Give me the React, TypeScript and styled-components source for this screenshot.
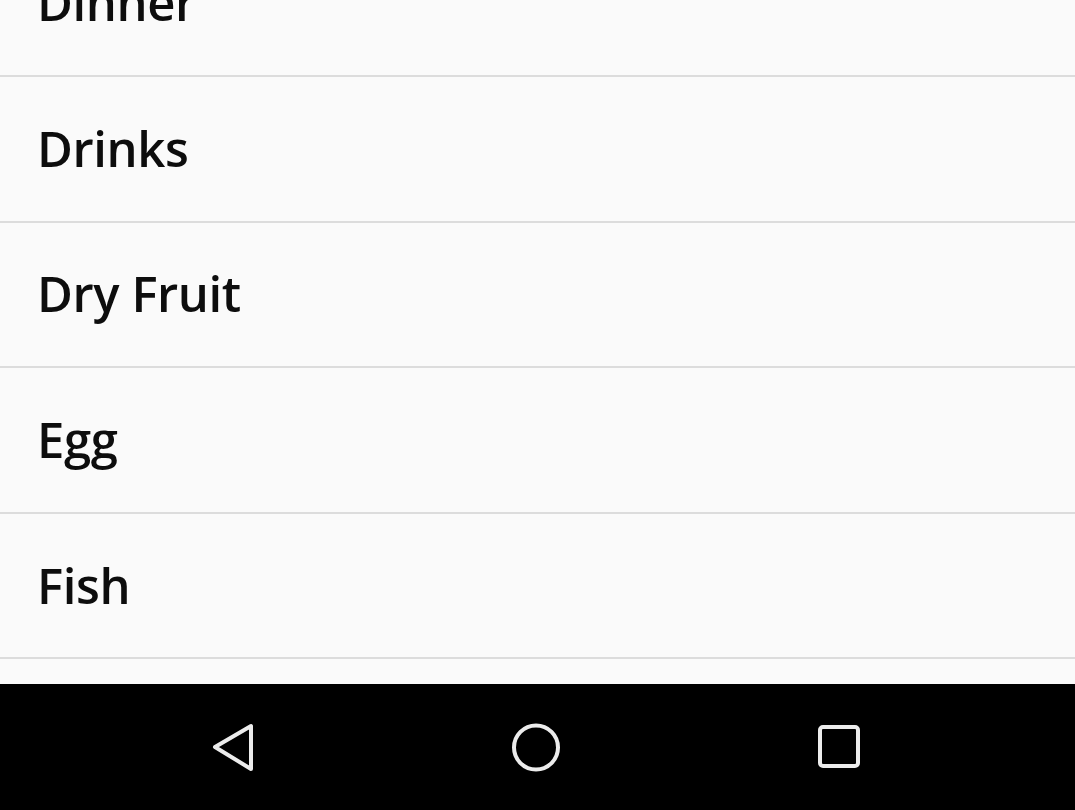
import React from "react";
import styled, { createGlobalStyle } from "styled-components";

const Global = createGlobalStyle`
  html, body { margin: 0; padding: 0; background: #fafafa; }
  body { font-family: "Open Sans", "Liberation Sans", sans-serif; }
`;

const Screen = styled.div`
  width: 1075px;
  height: 810px;
  display: flex;
  flex-direction: column;
  overflow: hidden;
  background: #fafafa;
`;

const ListViewport = styled.div`
  flex: 1;
  overflow: hidden;
`;

const List = styled.ul`
  list-style: none;
  margin: -68.6px 0 0 0;
  padding: 0;
`;

const Row = styled.li`
  height: 145.6px;
  box-sizing: border-box;
  border-bottom: 2px solid #dcdcdc;
  display: flex;
  align-items: center;
  padding-left: 37px;
`;

const Label = styled.span`
  font-family: "Open Sans", "Liberation Sans", sans-serif;
  font-weight: 600;
  font-size: 49px;
  color: #0d0d0d;
  letter-spacing: -0.4px;
  transform: translateY(-1px);
`;

const NavBar = styled.nav`
  height: 126px;
  flex-shrink: 0;
  background: #000;
  display: flex;
  align-items: center;
  justify-content: center;
  gap: 247px;
  padding-right: 4px;
`;

const NavButton = styled.button`
  width: 56px;
  height: 56px;
  padding: 0;
  border: none;
  background: transparent;
  display: flex;
  align-items: center;
  justify-content: center;
  svg { display: block; }
`;

const items = ["Dinner", "Drinks", "Dry Fruit", "Egg", "Fish", "Fruits"];

export default function App() {
  return (
    <>
      <Global />
      <Screen>
        <ListViewport>
          <List>
            {items.map((t) => (
              <Row key={t}>
                <Label>{t}</Label>
              </Row>
            ))}
          </List>
        </ListViewport>
        <NavBar>
          <NavButton aria-label="Back">
            <svg width="56" height="56" viewBox="0 0 56 56">
              <path d="M10 28 L46 7 L46 50 Z" fill="none" stroke="#ececec" strokeWidth="4" strokeLinejoin="round" />
            </svg>
          </NavButton>
          <NavButton aria-label="Home">
            <svg width="56" height="56" viewBox="0 0 56 56">
              <circle cx="28" cy="28.5" r="22" fill="none" stroke="#ececec" strokeWidth="4" />
            </svg>
          </NavButton>
          <NavButton aria-label="Recents">
            <svg width="56" height="56" viewBox="0 0 56 56">
              <rect x="9" y="8" width="38" height="39" rx="3" fill="none" stroke="#ececec" strokeWidth="4" />
            </svg>
          </NavButton>
        </NavBar>
      </Screen>
    </>
  );
}
